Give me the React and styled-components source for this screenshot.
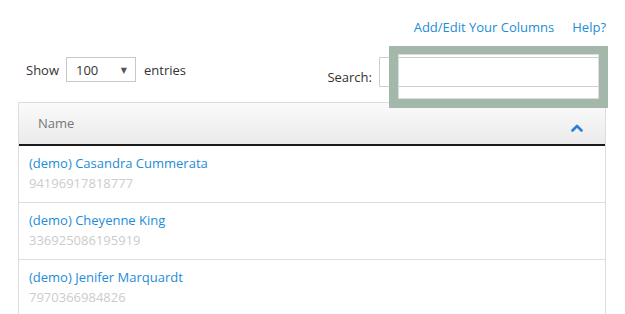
import styled, { createGlobalStyle } from 'styled-components';

const GlobalStyle = createGlobalStyle`
  html, body {
    margin: 0;
    padding: 0;
    background: #fff;
  }
  body {
    font-family: "Open Sans", "DejaVu Sans", sans-serif;
    font-size: 13px;
    color: #333;
  }
`;

const Page = styled.div`
  padding: 18px 18px 0 18px;
  height: 296px;
  overflow: hidden;
`;

const TopLinks = styled.div`
  display: flex;
  justify-content: flex-end;
  gap: 18px;
  padding-right: 1px;
  line-height: 18px;
`;

const Link = styled.a`
  color: #1e8cd6;
  text-decoration: none;
  cursor: pointer;
`;

const Controls = styled.div`
  display: flex;
  justify-content: space-between;
  align-items: flex-start;
  margin-top: 21px;
`;

const Length = styled.label`
  display: flex;
  align-items: center;
  gap: 7px;
  padding-left: 8px;
  line-height: 18px;
`;

const SelectBox = styled.div`
  width: 70px;
  height: 25px;
  box-sizing: border-box;
  border: 1px solid #c8c8c8;
  display: flex;
  align-items: center;
  justify-content: space-between;
  padding: 0 8px 0 9px;
  margin-right: 1px;
  color: #333;
`;

const Arrow = styled.span`
  font-size: 8px;
  color: #555;
`;

const Filter = styled.label`
  position: relative;
  display: flex;
  align-items: flex-end;
  gap: 7px;
  margin-right: 8px;
`;

const FilterText = styled.span`
  line-height: 18px;
  margin-bottom: 1px;
`;

const SearchInput = styled.input`
  width: 220px;
  height: 30px;
  box-sizing: border-box;
  border: 1px solid #cfcfcf;
  outline: none;
  padding: 0 6px;
  font: inherit;
`;

const Highlight = styled.div`
  position: absolute;
  right: -9px;
  top: -11px;
  width: 219px;
  height: 62px;
  box-sizing: border-box;
  border: 9px solid #a3b8ab;
  border-top-width: 8px;
  box-shadow: inset 0 0 0 1px #dcdcdc;
  pointer-events: none;
`;

const Table = styled.div`
  margin-top: 15px;
  border: 1px solid #dddddd;
  border-bottom: none;
  margin-right: 1px;
`;

const Header = styled.div`
  display: flex;
  align-items: center;
  justify-content: space-between;
  height: 41px;
  padding: 0 22px 0 19px;
  background: linear-gradient(#fafafa, #ebebeb);
  border-bottom: 2px solid #1a1a1a;
  color: #777;
`;

const HeaderText = styled.span`
  margin-top: -1px;
`;

const Row = styled.div`
  padding: 7px 10px 9px 10px;
  border-bottom: 1px solid #dddddd;
`;

const Name = styled.div`
  color: #1e8cd6;
  line-height: 20px;
`;

const Phone = styled.div`
  color: #cccccc;
  line-height: 20px;
`;

const rows = [
  { name: '(demo) Casandra Cummerata', phone: '94196917818777' },
  { name: '(demo) Cheyenne King', phone: '336925086195919' },
  { name: '(demo) Jenifer Marquardt', phone: '7970366984826' },
];

const Chevron = () => (
  <svg width="12" height="8" viewBox="0 0 12 8" style={{ marginTop: 8 }}>
    <polyline
      points="1.5,6.5 6,2 10.5,6.5"
      fill="none"
      stroke="#2b7fd4"
      strokeWidth="2.6"
      strokeLinecap="round"
      strokeLinejoin="round"
    />
  </svg>
);

export default function App() {
  return (
    <>
      <GlobalStyle />
      <Page>
        <TopLinks>
          <Link>Add/Edit Your Columns</Link>
          <Link>Help?</Link>
        </TopLinks>
        <Controls>
          <Length>
            Show
            <SelectBox>
              <span>100</span>
              <Arrow>▼</Arrow>
            </SelectBox>
            entries
          </Length>
          <Filter>
            <FilterText>Search:</FilterText>
            <SearchInput type="search" />
            <Highlight />
          </Filter>
        </Controls>
        <Table>
          <Header>
            <HeaderText>Name</HeaderText>
            <Chevron />
          </Header>
          {rows.map((r) => (
            <Row key={r.phone}>
              <Name>{r.name}</Name>
              <Phone>{r.phone}</Phone>
            </Row>
          ))}
        </Table>
      </Page>
    </>
  );
}
